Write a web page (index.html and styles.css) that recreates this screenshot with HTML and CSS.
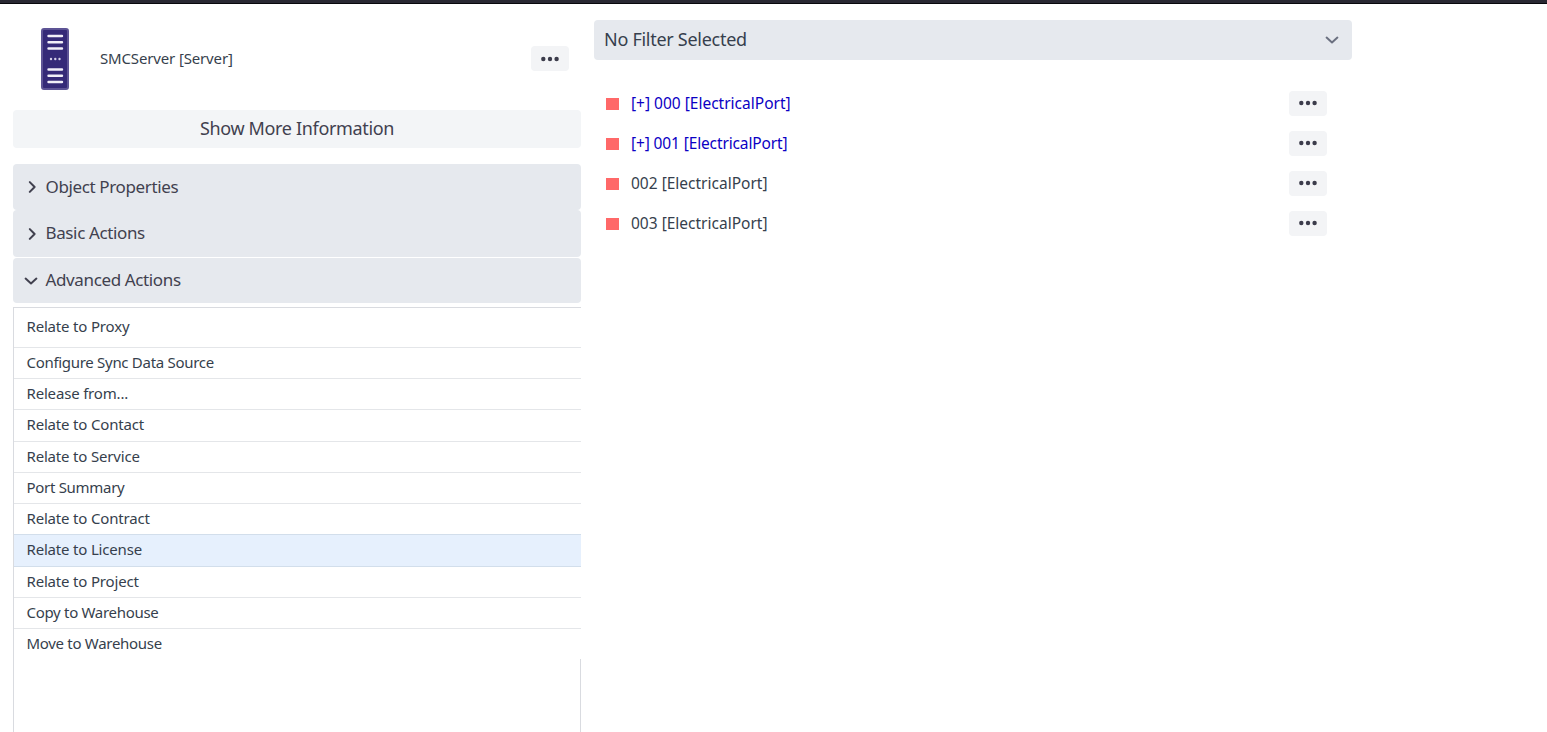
FILE: index.html
```html
<!DOCTYPE html>
<html lang="en">
<head>
<meta charset="utf-8">
<title>SMCServer</title>
<link rel="stylesheet" href="styles.css">
</head>
<body>
<svg class="defs" aria-hidden="true">
  <symbol id="dots" viewBox="0 0 18 6"><circle cx="2.3" cy="3" r="2.2"/><circle cx="9" cy="3" r="2.2"/><circle cx="15.6" cy="3" r="2.2"/></symbol>
  <symbol id="right" viewBox="0 0 8 12"><path d="M1.8 1.1 6.6 6 1.8 10.9"/></symbol>
  <symbol id="down" viewBox="0 0 14 8"><path d="M1.6 1.6 7 6.4l5.4-4.8"/></symbol>
</svg>
<div class="topbar"></div>
<main class="page">
  <section class="side">
    <header class="object">
      <svg class="server" viewBox="0 0 28 62"><rect x="1" y="1" width="26" height="60" rx="2" fill="#352a78" stroke="#5d5495" stroke-width="2"/><path d="M7.5 8h13.5M7.5 14.3h13.5M7.5 20.5h13.5M7.5 41.5h13.5M7.5 47.8h13.5M7.5 54h13.5" stroke="#f1eff8" stroke-width="2.4" stroke-linecap="round"/><g fill="#d5d0e8"><circle cx="10" cy="31" r="1.2"/><circle cx="14.3" cy="31" r="1.2"/><circle cx="18.5" cy="31" r="1.2"/></g></svg>
      <span class="object-name">SMCServer [Server]</span>
      <button class="more"><svg><use href="#dots"/></svg></button>
    </header>
    <button class="show-more"><span>Show More Information</span></button>
    <nav class="accordion">
      <div class="tab"><svg class="right"><use href="#right"/></svg><span>Object Properties</span></div>
      <div class="tab basic"><svg class="right"><use href="#right"/></svg><span>Basic Actions</span></div>
      <div class="tab open"><svg class="down"><use href="#down"/></svg><span>Advanced Actions</span></div>
    </nav>
    <div class="panel">
      <ul class="actions">
        <li>Relate to Proxy</li>
        <li class="tight">Configure Sync Data Source</li>
        <li>Release from...</li>
        <li>Relate to Contact</li>
        <li>Relate to Service</li>
        <li class="tight">Port Summary</li>
        <li>Relate to Contract</li>
        <li class="active">Relate to License</li>
        <li>Relate to Project</li>
        <li class="tight">Copy to Warehouse</li>
        <li class="tight">Move to Warehouse</li>
      </ul>
      <div class="rest"></div>
    </div>
  </section>
  <section class="content">
    <div class="filter"><span>No Filter Selected</span><svg class="down"><use href="#down"/></svg></div>
    <ul class="ports">
      <li><i class="box"></i><a>[+] 000 [ElectricalPort]</a><button class="more"><svg><use href="#dots"/></svg></button></li>
      <li><i class="box"></i><a class="narrow">[+] 001 [ElectricalPort]</a><button class="more"><svg><use href="#dots"/></svg></button></li>
      <li><i class="box"></i><span>002 [ElectricalPort]</span><button class="more"><svg><use href="#dots"/></svg></button></li>
      <li><i class="box"></i><span>003 [ElectricalPort]</span><button class="more"><svg><use href="#dots"/></svg></button></li>
    </ul>
  </section>
</main>
</body>
</html>
```
FILE: styles.css
```css
* { box-sizing: border-box; }
body { margin: 0; height: 732px; overflow: hidden; display: flex; flex-direction: column; background: #fff; color: #363f4d; font: 15px "Noto Sans", "Open Sans", sans-serif; letter-spacing: -0.4px; }
button { border: 0; padding: 0; color: inherit; font: inherit; letter-spacing: inherit; }
ul { margin: 0; padding: 0; list-style: none; }
.defs { display: none; }
.topbar { height: 4px; flex: none; background: #292832; border-bottom: 1px solid #08080c; }
.page { flex: 1; display: flex; gap: 13px; padding: 16px 195px 0 13px; min-height: 0; }
.side { width: 568px; display: flex; flex-direction: column; }
.object { height: 90px; display: flex; align-items: center; padding: 0 12px 13px 28px; flex: none; }
.server { width: 28px; height: 62px; margin-top: 1px; }
.object-name { margin-left: 31px; padding-bottom: 1px; letter-spacing: -0.15px; }
.more { margin-left: auto; width: 38px; height: 25px; border-radius: 4px; background: #f3f4f6; display: flex; align-items: center; justify-content: center; }
.more svg { width: 18px; height: 6px; fill: #3c3c4b; }
.show-more { height: 38px; flex: none; border-radius: 4px; background: #f3f5f7; color: #41414f; font-size: 18px; line-height: 34px; padding-bottom: 2px; letter-spacing: -0.34px; }
.accordion { margin-top: 16px; color: #41414f; font-size: 17px; flex: none; }
.tab { height: 46px; border-radius: 4px; background: #e6e9ee; display: flex; align-items: center; padding-left: 15px; }
.tab span { margin-left: auto; width: 535.5px; padding-bottom: 2px; letter-spacing: -0.37px; }
.basic { height: 47px; }
.open { margin-top: 1px; height: 45px; padding-left: 11px; }
.right, .down { fill: none; stroke: currentColor; stroke-width: 2; stroke-linecap: round; stroke-linejoin: round; flex: none; }
.right { width: 8px; height: 12px; }
.down { width: 14px; height: 8px; }
.panel { margin-top: 4px; flex: 1; display: flex; flex-direction: column; border-top: 1px solid #d9dbe0; border-left: 1px solid #d9dbe0; }
.actions { letter-spacing: -0.18px; }
.actions .tight { letter-spacing: -0.3px; }
.actions li { height: 31.25px; padding-left: 12.5px; line-height: 28px; border-bottom: 1px solid #e4e6e9; }
.actions li:first-child { height: 39.8px; line-height: 36px; }
.actions li:last-child { height: 30px; border-bottom: 0; }
.actions .active { background: #e6f0fd; border-bottom-color: #d2deeb; }
.actions li:has(+ .active) { border-bottom-color: #d2deeb; }
.rest { flex: 1; border-right: 1px solid #d9dbe0; }
.content { flex: 1; }
.filter { height: 40px; border-radius: 4px; padding: 0 13px 0 10px; display: flex; align-items: center; justify-content: space-between; background: #e6e9ee; font-size: 18px; letter-spacing: -0.28px; }
.filter span { padding-bottom: 2px; }
.filter svg { color: #6b7080; }
.ports { padding: 23px 25px 0 12px; font-size: 15.5px; letter-spacing: 0; }
.ports li { height: 40px; display: flex; align-items: center; }
.ports span, .ports a { padding-bottom: 1px; }
.box { width: 13px; height: 12px; margin: 1px 12px 0 0; background: #ff6868; }
.ports a { color: #0b00c4; }
.ports .narrow { letter-spacing: -0.13px; }
```
